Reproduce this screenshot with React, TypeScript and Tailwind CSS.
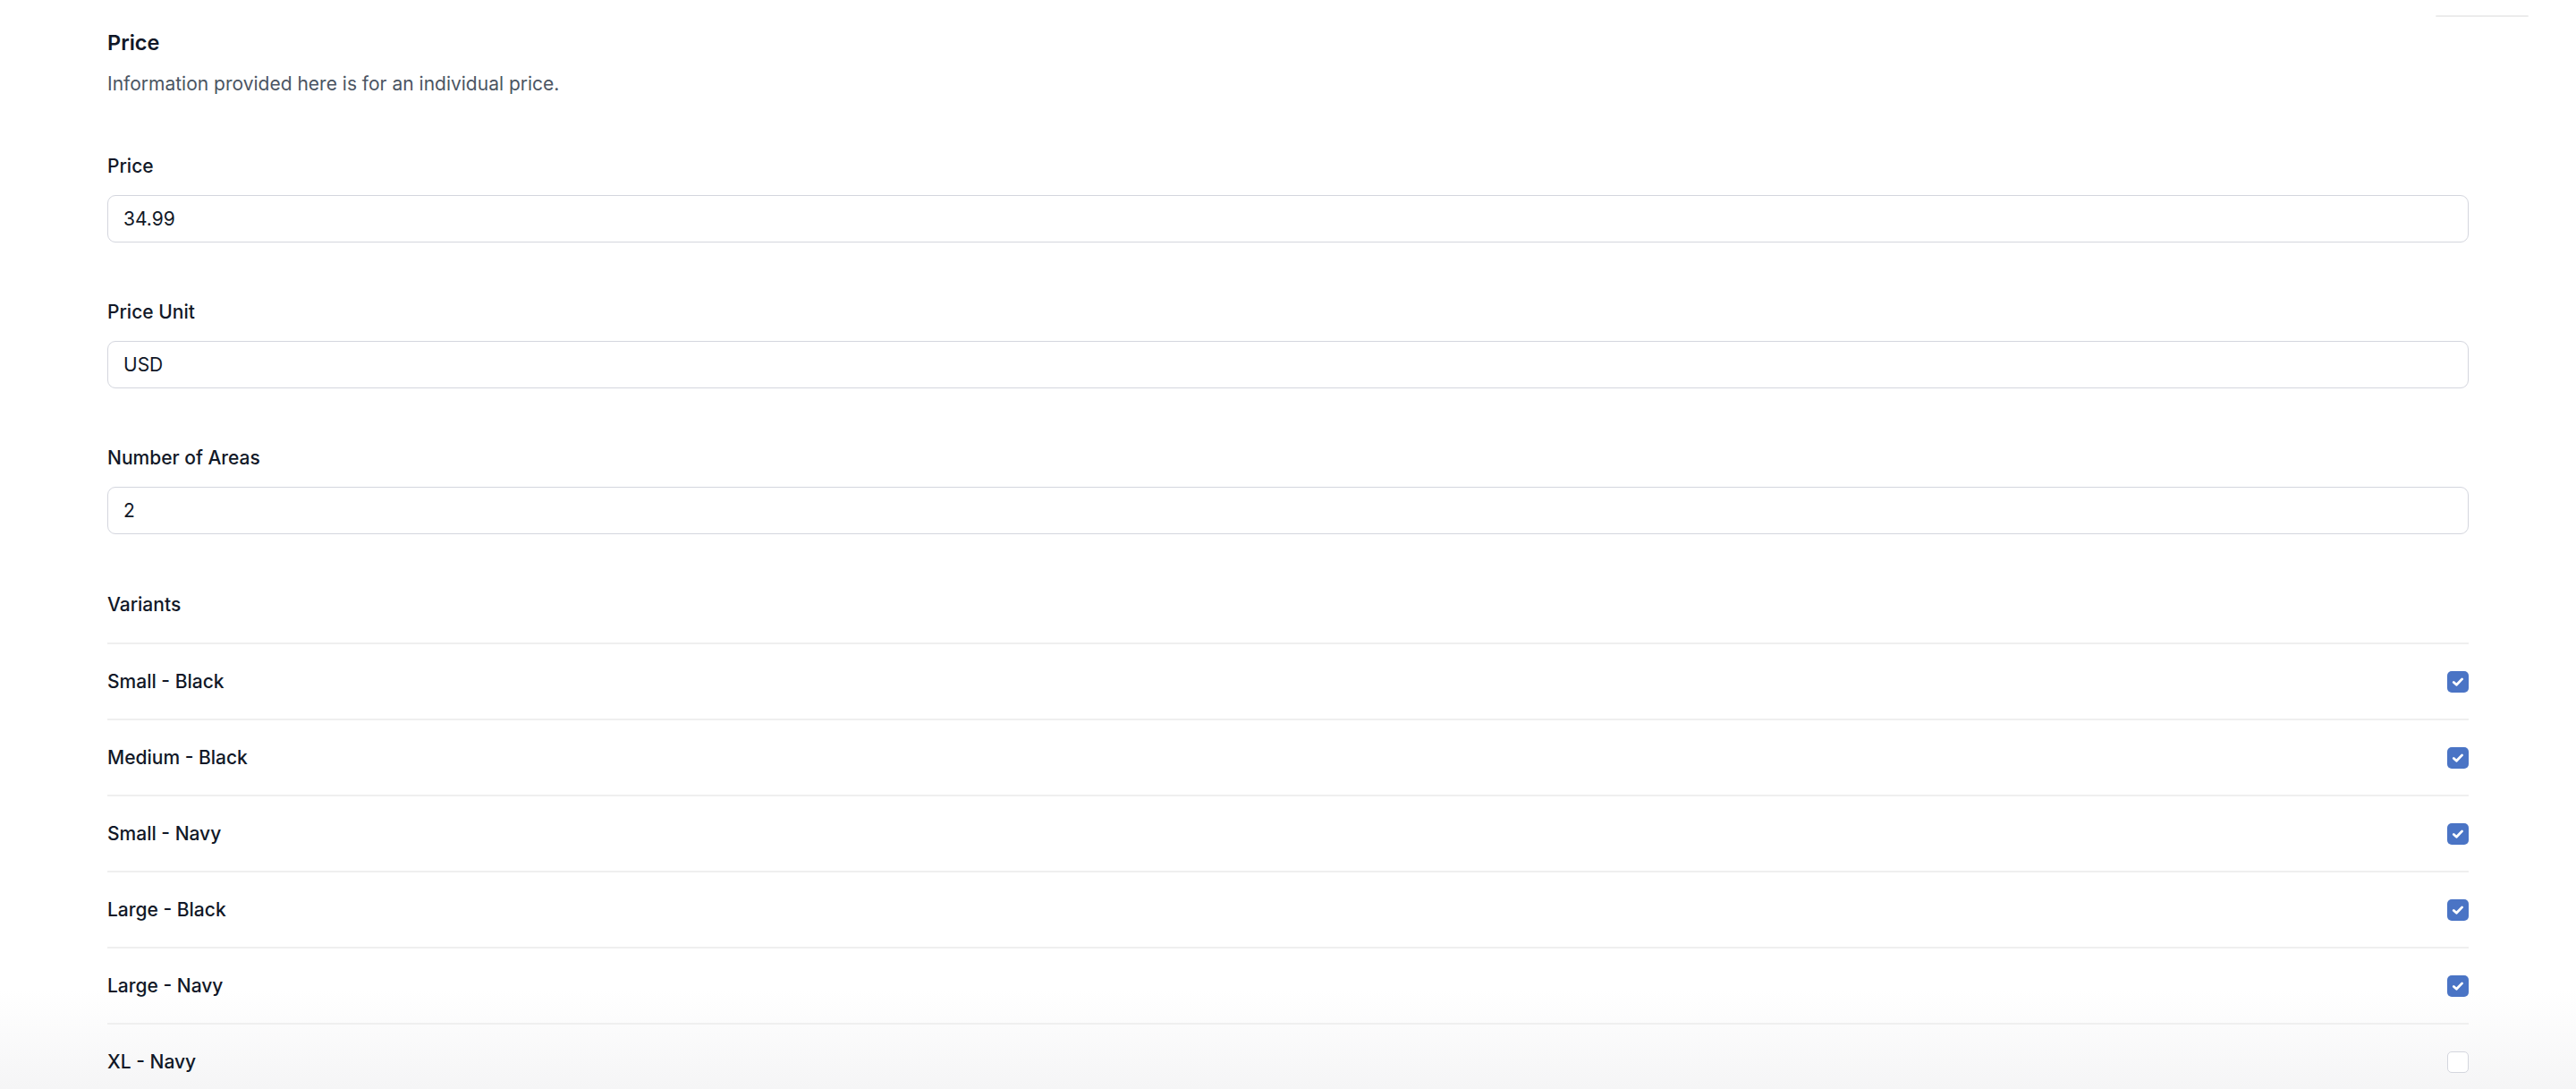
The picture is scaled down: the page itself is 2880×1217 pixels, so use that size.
import React from "react";

const variants: { name: string; checked: boolean }[] = [
  { name: "Small - Black", checked: true },
  { name: "Medium - Black", checked: true },
  { name: "Small - Navy", checked: true },
  { name: "Large - Black", checked: true },
  { name: "Large - Navy", checked: true },
  { name: "XL - Navy", checked: false },
];

function Field({ label, value }: { label: string; value: string }) {
  return (
    <div className="mt-[63px]">
      <div className="text-[21px] leading-[28px] font-medium text-[#111827] translate-y-[1px]">{label}</div>
      <div className="mt-[19px] h-[53px] rounded-[9px] border-[1.5px] border-[#d4d6de] bg-white flex items-center px-[17px] text-[21px] text-[#111827]">
        {value}
      </div>
    </div>
  );
}

function Check({ checked }: { checked: boolean }) {
  if (checked) {
    return (
      <div className="w-[24px] h-[24px] rounded-[5px] bg-[#4a74c5] flex items-center justify-center">
        <svg width="16" height="16" viewBox="0 0 16 16" fill="none">
          <path d="M3.3 8.5 L6.4 11.3 L12.6 4.9" stroke="white" strokeWidth="2.8" strokeLinecap="round" strokeLinejoin="round" />
        </svg>
      </div>
    );
  }
  return <div className="w-[24px] h-[24px] rounded-[5px] border-[1.5px] border-[#d4d6de] bg-white" />;
}

export default function App() {
  return (
    <div className="relative h-[1217px] overflow-hidden bg-white" style={{ fontFamily: "Inter, 'Noto Sans', sans-serif" }}>
      <div className="pointer-events-none absolute left-0 right-0 bottom-0 h-[110px] bg-gradient-to-b from-white to-[#f5f5f6]" />
      <div className="absolute top-[17px] left-[2723px] w-[104px] h-[2px] bg-[#ececec] rounded-full" />
      <div className="relative px-[120px] pt-[33px]">
        <div className="text-[23.5px] leading-[30px] font-semibold text-[#111827]">Price</div>
        <div className="mt-[17px] text-[21px] leading-[28px] text-[#4b5563]">
          Information provided here is for an individual price.
        </div>
        <div className="mt-[10px]">
          <Field label="Price" value="34.99" />
          <Field label="Price Unit" value="USD" />
          <Field label="Number of Areas" value="2" />
        </div>
        <div className="mt-[65px] text-[21px] leading-[28px] font-medium text-[#111827]">Variants</div>
        <div className="mt-[28px]">
          {variants.map((v) => (
            <div key={v.name} className="h-[85px] border-t-2 border-[#efefef] flex items-center justify-between">
              <span className="text-[21px] font-medium text-[#111827]">{v.name}</span>
              <Check checked={v.checked} />
            </div>
          ))}
        </div>
      </div>
    </div>
  );
}
